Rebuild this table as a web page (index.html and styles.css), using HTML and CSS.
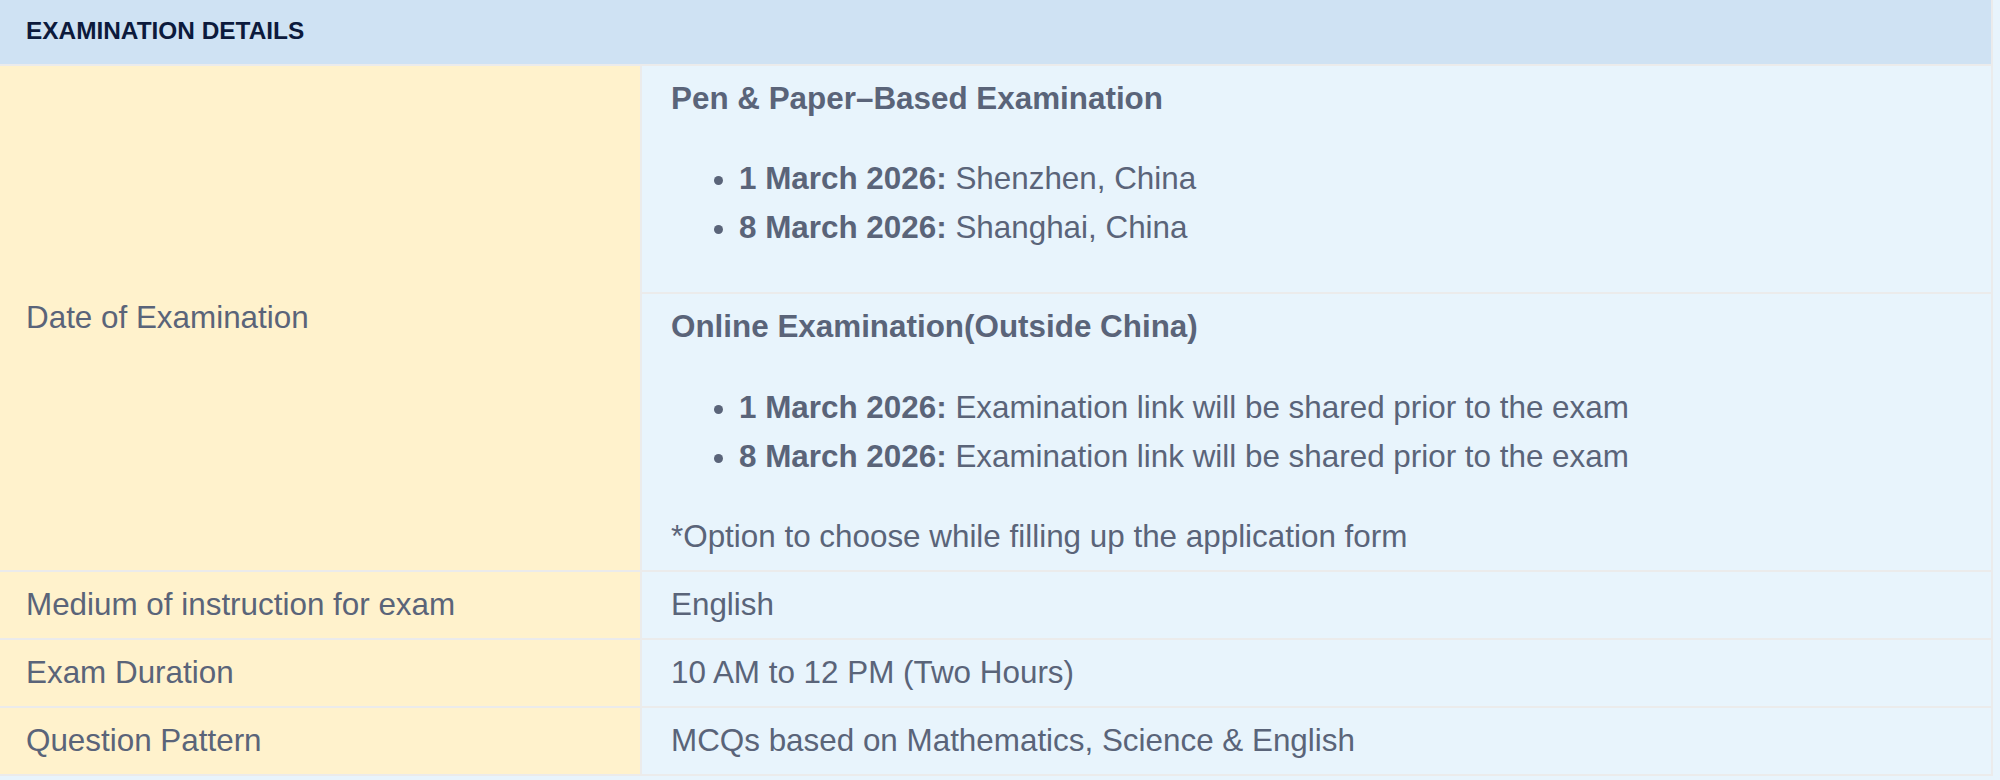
FILE: index.html
```html
<!DOCTYPE html>
<html lang="en">
<head>
<meta charset="utf-8">
<title>Examination Details</title>
<link rel="stylesheet" href="styles.css">
</head>
<body>
<div class="details">
  <div class="head">EXAMINATION DETAILS</div>

  <div class="label label-tall">Date of Examination</div>
  <div class="value value-stack">
    <div class="block block-first">
      <p class="block-title">Pen &amp; Paper–Based Examination</p>
      <ul class="dates">
        <li><strong>1 March 2026:</strong> Shenzhen, China</li>
        <li><strong>8 March 2026:</strong> Shanghai, China</li>
      </ul>
    </div>
    <div class="block block-second">
      <p class="block-title">Online Examination(Outside China)</p>
      <ul class="dates dates-online">
        <li><strong>1 March 2026:</strong> Examination link will be shared prior to the exam</li>
        <li><strong>8 March 2026:</strong> Examination link will be shared prior to the exam</li>
      </ul>
      <p class="note">*Option to choose while filling up the application form</p>
    </div>
  </div>

  <div class="label">Medium of instruction for exam</div>
  <div class="value">English</div>

  <div class="label">Exam Duration</div>
  <div class="value">10 AM to 12 PM (Two Hours)</div>

  <div class="label">Question Pattern</div>
  <div class="value">MCQs based on Mathematics, Science &amp; English</div>
</div>
</body>
</html>
```

FILE: styles.css
```css
html, body {
  margin: 0;
  padding: 0;
}

body {
  background: #e8f4fc;
  font-family: "Liberation Sans", Arial, Helvetica, sans-serif;
  color: #5a6479;
  font-size: 31.4px;
  line-height: 49px;
  width: 2000px;
  height: 780px;
  overflow: hidden;
}

.details {
  display: grid;
  grid-template-columns: 640px 1349px;
  gap: 2px;
  width: 1991px;
  padding: 0 2px 2px 0;
  background: #ebebeb;
}

.head {
  grid-column: 1 / span 2;
  background: #cfe2f3;
  color: #0c1a3c;
  font-size: 24.4px;
  font-weight: bold;
  line-height: 28px;
  padding: 17px 26px 19px;
}

.label {
  background: #fff2cc;
  padding: 8px 26px 9px;
}

.label-tall {
  display: flex;
  align-items: center;
}

.value {
  background: #e8f4fc;
  padding: 8px 29px 9px;
}

.value-stack {
  padding: 0;
  display: flex;
  flex-direction: column;
  gap: 2px;
  background: #ebebeb;
}

.block {
  background: #e8f4fc;
  padding: 8px 29px 9px;
}

.block-title {
  margin: 0;
  font-weight: bold;
}

.dates {
  margin: 31px 0;
  padding-left: 68px;
}

.dates-online {
  margin-top: 32px;
}

.dates strong {
  font-weight: bold;
}

.note {
  margin: 0;
}
```
